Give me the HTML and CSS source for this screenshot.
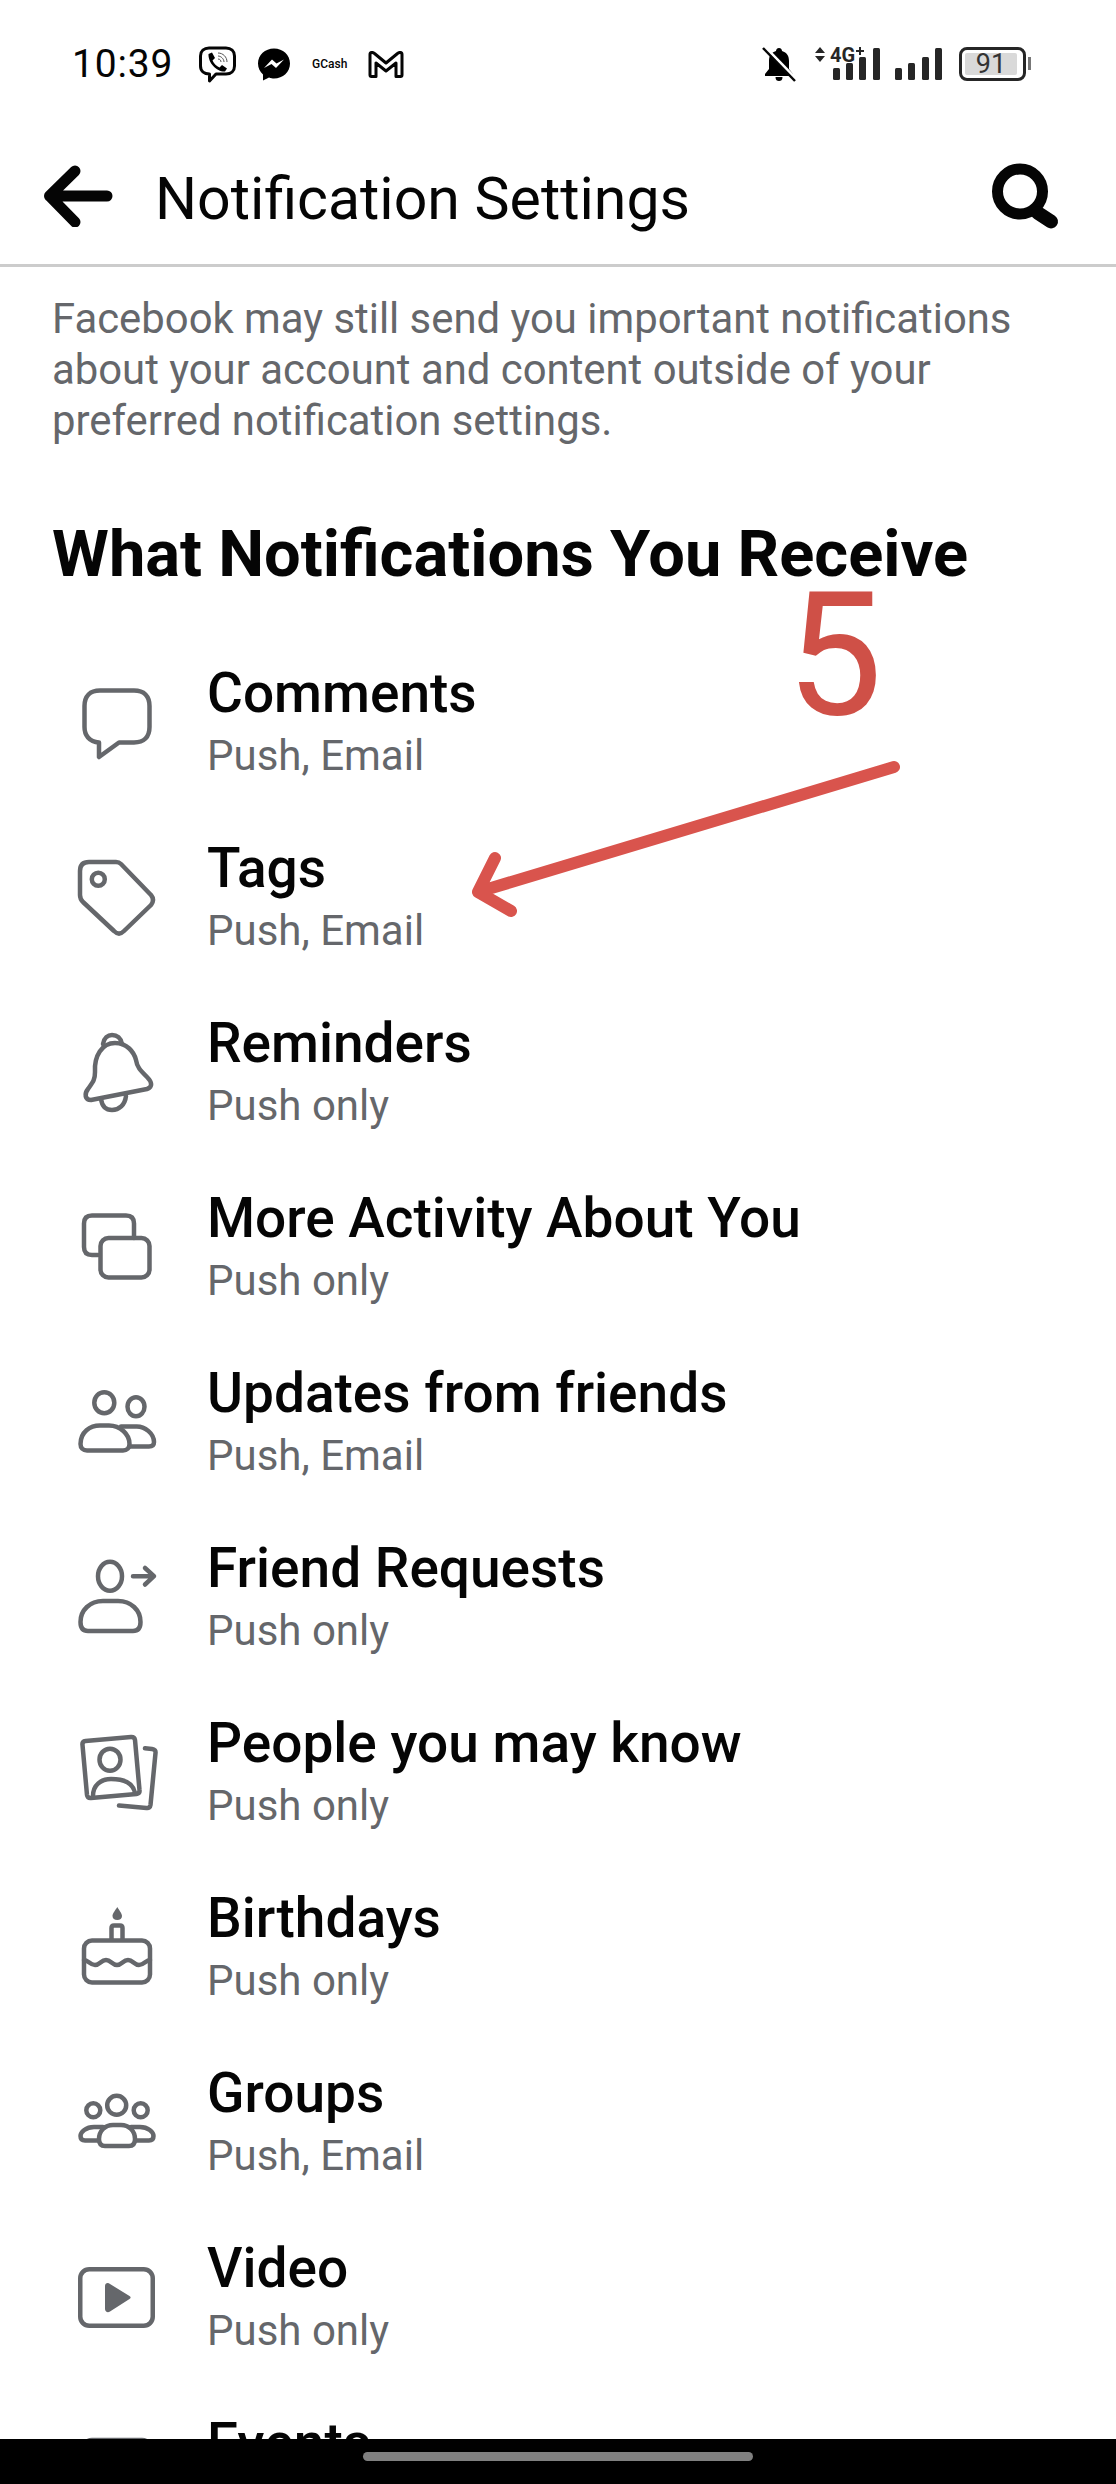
FILE: index.html
```html
<!DOCTYPE html>
<html lang="en">
  <head>
    <meta charset="utf-8"/>
    <title>Notification Settings</title>
    <link rel="stylesheet" href="styles.css">
  </head>
  <body>
    <div id="phone">
      <div id="statusbar">
        <span class="time">10:39</span>
        <svg class="st-viber" viewBox="0 0 37 37"><path class="st-line" d="M10 2 H27 C32 2 35.500 5 35.500 10 V20 C35.500 25 32 28 27 28 H17 L10.500 35 V28 C5 28 1.500 25 1.500 20 V10 C1.500 5 5 2 10 2 Z"/><path d="M9.500 8 L13 6.500 L16 12 L13.500 14.500 C15 18 17.500 20 20.500 21.500 L23 19 L28 22.500 L26 25.500 C18 26 9 17 9.500 8 Z"/><path class="st-thin" d="M19 7 C24 7 28 11 28 16 M19 10 C22 10 25 13 25 16 M19 13 C21 13 22 14.500 22 16"/></svg>
        <svg class="st-messenger" viewBox="0 0 32 33"><path d="M16 0.500 C7 0.500 0 7 0 15.500 C0 20 2 24 5 26.500 L5 32.500 L11 29.500 C13 30.300 14.500 30.500 16 30.500 C25 30.500 32 24 32 15.500 C32 7 25 0.500 16 0.500 Z"/><path class="st-white" d="M6 20 L14 11.500 L18.500 15.500 L26 11.500 L18 20 L13.500 16 Z"/></svg>
        <span class="gcash">GCash</span>
        <svg class="st-gmail" viewBox="0 0 36 27"><path class="st-line" d="M2 3.500 C2 1 5 1 6.500 2.500 L18 12 L29.500 2.500 C31 1 34 1 34 3.500 V24 C34 25 33.500 25.500 32.500 25.500 H28 V12 L18 20 L8 12 V25.500 H3.500 C2.500 25.500 2 25 2 24 Z"/></svg>
        <div class="st-right">
          <svg class="st-bell" viewBox="0 0 34 35"><path d="M17 1 C19 1 20 2.500 20 4 C25 5.500 27 9 27 14 V22 L31 27 V29 H3 V27 L7 22 V14 C7 9 9 5.500 14 4 C14 2.500 15 1 17 1 Z M13.500 30 H20.500 C20.500 33 19 34 17 34 C15 34 13.500 33 13.500 30 Z"/><path class="st-slash-bg" d="M3 0 L34 32"/><path class="st-slash" d="M1 1 L33 34"/></svg>
          <svg class="st-signal" viewBox="0 0 127 34">
            <path class="st-arrows" d="M5 0 L10 6 H0 Z M0 9 H10 L5 15 Z"/>
            <text class="st-4g" x="15" y="15">4G</text>
            <path class="st-arrows" d="M41 3 H44 V0 H46 V3 H49 V5 H46 V8 H44 V5 H41 Z"/>
            <rect x="18" y="21" width="7" height="12" rx="1.500"/>
            <rect x="31" y="16" width="7" height="17" rx="1.500"/>
            <rect x="44" y="10" width="7" height="23" rx="1.500"/>
            <rect x="58" y="1" width="7" height="32" rx="1.500"/>
            <rect x="80" y="21" width="7" height="12" rx="1.500"/>
            <rect x="93" y="16" width="7" height="17" rx="1.500"/>
            <rect x="107" y="10" width="7" height="23" rx="1.500"/>
            <rect x="120" y="1" width="7" height="32" rx="1.500"/>
          </svg>
          <div class="battery"><span class="battery-fill">91</span></div>
        </div>
      </div>

      <div id="appbar">
        <svg class="back" viewBox="0 0 76 62"><path d="M67 31 H9.500 M35 6 L9.500 31 L35 57"/></svg>
        <h1>Notification Settings</h1>
        <svg class="search" viewBox="0 0 80 80"><circle cx="35" cy="35.500" r="22.500"/><path class="handle" d="M53 57 L66 65.500"/></svg>
      </div>

      <div id="content">
        <p class="intro">Facebook may still send you important notifications about your account and content outside of your preferred notification settings.</p>
        <h2>What Notifications You Receive</h2>

        <div class="row">
          <svg class="ico" viewBox="0 0 84 84"><path d="M24 60.500 C14 60 9.500 53 9.500 45 V24 C9.500 14 15 8.500 25 8.500 H59 C69 8.500 74.500 14 74.500 24 V45 C74.500 55 69 60.500 59 60.500 H44 L24 75 Z"/></svg>
          <div class="txt"><div class="name">Comments</div><div class="sub">Push, Email</div></div>
        </div>
        <div class="row">
          <svg class="ico" viewBox="0 0 84 84"><path d="M14 5 H41 Q44 5 46 7 L76 38 Q80 43 76 48 L49 74 Q44 79 39 74 L8 45 Q5 42 5 38 V14 Q5 5 14 5 Z"/><circle cx="23.300" cy="22.300" r="6.500"/></svg>
          <div class="txt"><div class="name">Tags</div><div class="sub">Push, Email</div></div>
        </div>
        <div class="row">
          <svg class="ico" viewBox="0 0 84 84"><path d="M16 68 C10 68 9 62 13 57 C18 50 20 48 20 40 C19 24 27 11 40 11 C52 11 59 20 61 28 C62 35 65 38 72 45 C77 50 78 55 72 57 Z"/><path d="M28 12 C29 6 33 3 37 3 C42 3 46 6 47 12"/><path d="M26 67 C27 74 31 78 37 78 C44 78 50 73 51 64"/></svg>
          <div class="txt"><div class="name">Reminders</div><div class="sub">Push only</div></div>
        </div>
        <div class="row">
          <svg class="ico" viewBox="0 0 84 84"><path d="M23 48 H17 Q9 48 9 40 V16.500 Q9 8.500 17 8.500 H51 Q59 8.500 59 16.500 V31"/><rect x="25.500" y="31" width="49" height="39.500" rx="8"/></svg>
          <div class="txt"><div class="name">More Activity About You</div><div class="sub">Push only</div></div>
        </div>
        <div class="row">
          <svg class="ico" viewBox="0 0 84 84"><ellipse cx="29.300" cy="20.700" rx="10" ry="10.500"/><ellipse cx="61" cy="24.700" rx="8.500" ry="9.500"/><path d="M5.500 62 C5.500 50 15 43.500 25 43.500 H34 C45 43.500 54.500 52 54.500 62 C54.500 66 52 68.500 48 68.500 H12 C8 68.500 5.500 66 5.500 62 Z"/><path d="M46 44.500 H60 C70 43.500 79 52 79 60 C79 63 77 64.500 74 64.500 H54.500"/></svg>
          <div class="txt"><div class="name">Updates from friends</div><div class="sub">Push, Email</div></div>
        </div>
        <div class="row">
          <svg class="ico" viewBox="0 0 84 84"><ellipse cx="35" cy="19.200" rx="12" ry="14.500"/><path d="M5.500 65 C5.500 53 15 44 28 44 H43 C56 44 65.500 53 65.500 65 C65.500 71 63 74 58 74 H13 C8 74 5.500 71 5.500 65 Z"/><path d="M58 19.200 H78 M70 11 L79 19.200 L70 27.500"/></svg>
          <div class="txt"><div class="name">Friend Requests</div><div class="sub">Push only</div></div>
        </div>
        <div class="row">
          <svg class="ico" viewBox="0 0 84 84"><path d="M7.500 13 Q7 9.500 10.500 9 L56 5 Q59.500 4.800 60 8 L64.500 58 Q65 61.500 61.500 62 L16 66 Q12.500 66.300 12 63 Z"/><ellipse cx="35" cy="27.700" rx="10.500" ry="11"/><path d="M18 64 C18 53 26 47 36 47 C47 47 58 50 60 61"/><path d="M70 16.300 L77 17 Q81 17.500 80.500 21 L75.500 73 Q75 76.500 71.500 76 L44 73.500"/></svg>
          <div class="txt"><div class="name">People you may know</div><div class="sub">Push only</div></div>
        </div>
        <div class="row">
          <svg class="ico" viewBox="0 0 84 84"><path class="solid" d="M42.300 0 C44 3 47 6.500 47 9 C47 11.500 45 13 42.300 13 C39.500 13 37.500 11.500 37.500 9 C37.500 6.500 40.500 3 42.300 0 Z"/><path d="M36.500 32 V21 Q36.500 18.500 39 18.500 H45 Q47.500 18.500 47.500 21 V32"/><rect x="9" y="33.500" width="66" height="42" rx="8"/><path d="M9 53 C13 53 15 58 20 58 C25 58 26 53 31 53 C36 53 37 58 42 58 C47 58 48 53 53 53 C58 53 59 58 64 58 C69 58 71 53 75 53"/></svg>
          <div class="txt"><div class="name">Birthdays</div><div class="sub">Push only</div></div>
        </div>
        <div class="row">
          <svg class="ico" viewBox="0 0 84 84"><circle cx="41.700" cy="23.300" r="9.500"/><circle cx="18.300" cy="28.300" r="7"/><circle cx="65.700" cy="28.300" r="7"/><path d="M24 57 C24 49 30 43 38 43 H46 C54 43 60 49 60 57 C60 61.500 58 64 54 64 H30 C26 64 24 61.500 24 57 Z"/><path d="M28 45 H19 C11 45 5.500 50 5.500 54 C5.500 57 7 58.500 10 58.500 H23"/><path d="M56 45 H65 C73 45 78.500 50 78.500 54 C78.500 57 77 58.500 74 58.500 H61"/></svg>
          <div class="txt"><div class="name">Groups</div><div class="sub">Push, Email</div></div>
        </div>
        <div class="row">
          <svg class="ico" viewBox="0 0 84 84"><rect x="5.250" y="12.250" width="72.500" height="56.500" rx="9"/><path class="solid" d="M30 29 C30 26 33 25 35 27 L54.500 39 C56 40 56 41 54.500 42 L35 54.500 C33 56 30 55 30 52 Z"/></svg>
          <div class="txt"><div class="name">Video</div><div class="sub">Push only</div></div>
        </div>
        <div class="row">
          <svg class="ico" viewBox="0 0 84 84"><rect x="8" y="8" width="68" height="66" rx="9"/><path class="solid" d="M8 17 Q8 8 17 8 H67 Q76 8 76 17 V26 H8 Z"/></svg>
          <div class="txt"><div class="name">Events</div><div class="sub">Push only</div></div>
        </div>

        <span class="note-num">5</span>
        <svg class="note-arrow" viewBox="0 0 1116 2484"><path d="M894 767 L478 892 M495 858 L478 892 L511 911"/></svg>
      </div>

      <div id="navbar"><div class="handlebar"></div></div>
    </div>
  </body>
</html>
```

FILE: styles.css
```css
* {
  box-sizing: border-box;
}
html, body {
  margin: 0;
  padding: 0;
  background: #ffffff;
}
body {
  font-family: Roboto, "Liberation Sans", sans-serif;
  color: #050505;
}
#phone {
  position: relative;
  width: 1116px;
  height: 2484px;
  display: flex;
  flex-direction: column;
  overflow: hidden;
}

/* status bar */
#statusbar {
  flex: none;
  height: 128px;
  padding-left: 72px;
  display: flex;
  align-items: center;
}
.time {
  width: 101px;
  font-size: 39px;
  letter-spacing: 0.8px;
  line-height: 1;
}
#statusbar svg {
  flex: none;
  display: block;
}
.st-viber {
  width: 37px;
  height: 37px;
  margin-left: 26px;
}
.st-messenger {
  width: 32px;
  height: 33px;
  margin-left: 22px;
}
.gcash {
  width: 36px;
  margin-left: 22px;
  font-size: 12px;
  font-weight: 500;
  white-space: nowrap;
}
.st-gmail {
  width: 36px;
  height: 27px;
  margin-left: 20px;
}
.st-line {
  fill: none;
  stroke: #050505;
  stroke-width: 3;
  stroke-linejoin: round;
}
.st-thin {
  fill: none;
  stroke: #555555;
  stroke-width: 1;
}
.st-white {
  fill: #ffffff;
}
.st-right {
  position: absolute;
  left: 762px;
  top: 47px;
  display: flex;
  align-items: flex-start;
}
.st-bell {
  width: 34px;
  height: 35px;
}
.st-slash-bg {
  fill: none;
  stroke: #ffffff;
  stroke-width: 3;
}
.st-slash {
  fill: none;
  stroke: #050505;
  stroke-width: 2.5;
}
.st-signal {
  width: 127px;
  height: 34px;
  margin-left: 19px;
  overflow: visible;
  fill: #262626;
}
.st-4g {
  font: 700 20px "Liberation Sans Narrow", Roboto, sans-serif;
  fill: #262626;
}
.battery {
  position: relative;
  width: 67px;
  height: 34px;
  margin-left: 17px;
  padding: 3px;
  border: 3px solid #262626;
  border-radius: 8px;
}
.battery::after {
  content: "";
  position: absolute;
  right: -8px;
  top: 7px;
  width: 3px;
  height: 13px;
  background: #777777;
}
.battery-fill {
  display: block;
  width: 52px;
  height: 22px;
  background: #d9d9d9;
  border-radius: 2px;
  font-size: 27px;
  line-height: 22px;
  text-align: center;
  color: #333333;
}

/* header */
#appbar {
  flex: none;
  height: 139px;
  padding: 0 51px 0 40px;
  border-bottom: 3px solid #cccccc;
  display: flex;
  align-items: center;
}
#appbar h1 {
  margin: 5px 0 0 39px;
  font-size: 59px;
  font-weight: 400;
  line-height: 70px;
  white-space: nowrap;
}
.back {
  width: 76px;
  height: 62px;
  flex: none;
  fill: none;
  stroke: #050505;
  stroke-width: 11;
  stroke-linecap: round;
  stroke-linejoin: round;
}
.search {
  width: 80px;
  height: 80px;
  flex: none;
  margin-left: auto;
  fill: none;
  stroke: #050505;
  stroke-width: 11;
}
.handle {
  stroke-width: 14;
  stroke-linecap: round;
}

/* list */
#content {
  flex: 1;
  min-height: 0;
  overflow: hidden;
}
.intro {
  margin: 26px 60px 0 52px;
  font-size: 41.85px;
  line-height: 51px;
  color: #65676b;
}
h2 {
  margin: 73px 0 47px 52px;
  font-size: 65px;
  font-weight: 700;
  line-height: 70px;
  white-space: nowrap;
}
.row {
  height: 175px;
  padding-left: 75px;
  display: flex;
  align-items: center;
  gap: 48px;
}
.ico {
  width: 84px;
  height: 84px;
  flex: none;
  fill: none;
  stroke: #65676b;
  stroke-width: 4.5;
  stroke-linecap: round;
  stroke-linejoin: round;
}
.ico .solid {
  fill: #65676b;
  stroke: none;
}
.txt {
  padding-bottom: 6px;
}
.name {
  margin-bottom: 6px;
  font-size: 55px;
  font-weight: 500;
  line-height: 64px;
}
.sub {
  font-size: 42px;
  line-height: 50px;
  color: #65676b;
}

/* red marks drawn over the screenshot */
.note-num {
  position: absolute;
  left: 786px;
  top: 590px;
  font-size: 172px;
  line-height: 130px;
  color: #cf5047;
}
.note-arrow {
  position: absolute;
  left: 0;
  top: 0;
  width: 1116px;
  height: 2484px;
  fill: none;
  stroke: #d9544d;
  stroke-width: 12;
  stroke-linecap: round;
  stroke-linejoin: round;
}

/* bottom black bar */
#navbar {
  flex: none;
  height: 45px;
  padding-top: 13px;
  background: #000000;
}
.handlebar {
  width: 390px;
  height: 9px;
  margin-left: 363px;
  background: #808080;
  border-radius: 5px;
}
```
